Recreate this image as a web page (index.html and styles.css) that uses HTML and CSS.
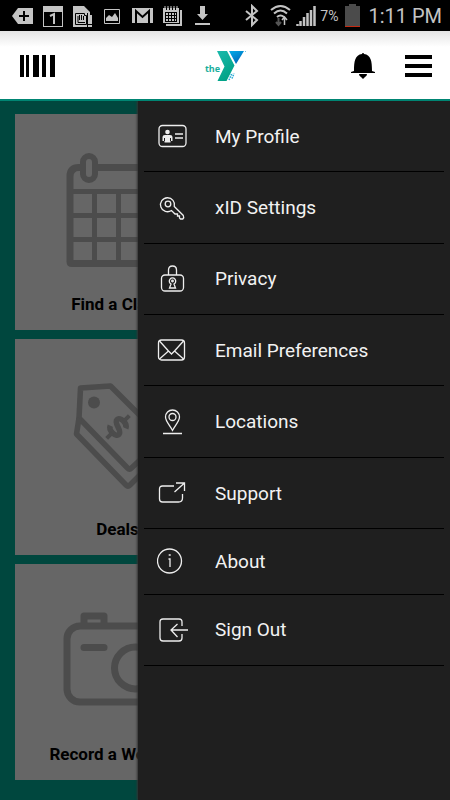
FILE: index.html
```html
<!DOCTYPE html>
<html lang="en">
<head>
<meta charset="utf-8">
<meta name="viewport" content="width=device-width, initial-scale=1">
<title>the Y</title>
<link rel="stylesheet" href="styles.css">
</head>
<body>
<div class="status">
  <div class="status-left">
    <svg width="21" height="24" viewBox="0 0 21 24"><path fill="#c4c4c4" d="M6 4h15v16H6L0 12z"/><path d="M7 12h10M12 7v10" stroke="#000" stroke-width="2"/></svg>
    <svg width="20" height="24" viewBox="0 0 20 24"><path fill="#c4c4c4" d="M0 2h20v21H0z"/><path d="M1 8h18v14H1z"/><path d="M7 12l4-2v10" fill="none" stroke="#c4c4c4" stroke-width="2"/></svg>
    <svg width="20" height="24" viewBox="0 0 20 24"><path fill="#c4c4c4" d="M0 2h11l6 6v3h2v12H0z"/><path d="M2.500 9.500h9v2h2v9h-11z" fill="none" stroke="#000"/><path d="M5 12v6.500h7M6.500 11v5M8.500 11v5M10.500 12v4" fill="none" stroke="#000"/><path d="M14.500 9v14M15 20.500h4" stroke="#000"/></svg>
    <svg width="18" height="24" viewBox="0 0 18 24"><path fill="none" stroke="#c4c4c4" d="M1.500 5.500h15v14h-15z"/><path fill="#c4c4c4" d="M3 14l3-3 3 2 3-4 3 5v3H3z"/></svg>
    <svg width="22" height="24" viewBox="0 0 22 24"><path fill="#c4c4c4" d="M1 4h21v15H1z"/><path d="M5 19V7l6.500 6L18 7v12" fill="none" stroke="#000" stroke-width="2"/></svg>
    <svg width="19" height="24" viewBox="0 0 19 24"><path fill="#c4c4c4" d="M3 6h16v16H3z"/><path d="M0 3h17v17H0z"/><path fill="#c4c4c4" d="M0 4h16v15H0z"/><path stroke="#000" d="M2 8.500h12M2 11.500h12M2 14.500h12M2 17.500h12M2.500 8v10M5.500 8v10M8.500 8v10M11.500 8v10M13.500 8v10M3.500 3v3M6.500 3v3M9.500 3v3M12.500 3v3"/><path stroke="#c4c4c4" d="M2 2v3M5 2v3M8 2v3M11 2v3M14 2v3"/></svg>
    <svg width="18" height="24" viewBox="0 0 18 24"><path fill="#c4c4c4" d="M8 2h5v8h3l-5.500 6L5 10h3zM3 19h15v2H3z"/></svg>
  </div>
  <div class="status-right">
    <svg width="22" height="24" viewBox="0 0 22 24"><path d="M3 7l11 9-5 5V2l5 5-11 9" fill="none" stroke="#c4c4c4" stroke-width="2"/></svg>
    <svg width="23" height="24" viewBox="0 0 23 24"><path d="M2 6q9.500-8 19 0M5 9.500q6.500-6 13 0M8 13q3.500-3 7 0" fill="none" stroke="#c4c4c4" stroke-width="2"/><path d="M15.500 21v-8M13 16l2.500-3 2.500 3" fill="none" stroke="#c4c4c4" stroke-width="1.500"/><path d="M9.500 14v7M7 18l2.500 3 2.500-3" fill="none" stroke="#555" stroke-width="2"/></svg>
    <svg width="20" height="24" viewBox="0 0 20 24"><path d="M1.500 22v-2M4.500 22v-5M8 22V13M11.500 22V9M15 22V6M18.500 22V2" stroke="#c4c4c4" stroke-width="2.500"/></svg>
    <span class="percent">7%</span>
    <svg width="22" height="24" viewBox="0 0 22 24"><path fill="#4b4b4b" d="M3 2h4V0h7v2h4v21H3z"/><path fill="#c42a12" d="M3 22h15v1H3z"/></svg>
    <span class="time">1:11 PM</span>
  </div>
</div>

<header class="header">
  <button class="icon-button" type="button" aria-label="Membership barcode"><svg width="35" height="24" viewBox="0 0 35 24"><path d="M0 1h4v22H0zM6 1h3v22H6zM13 1h6v22h-6zM22 1h4v22h-4zM30 1h5v22h-5z"/></svg></button>
  <a class="logo" href="#" aria-label="the Y">
    <span class="logo-the">the</span>
    <svg width="30" height="32" viewBox="0 0 30 32"><defs><linearGradient id="teal" x1="0" y1="0" x2=".5" y2="1"><stop offset="0" stop-color="#1bb9ac"/><stop offset="1" stop-color="#00a286"/></linearGradient><linearGradient id="blue" x1="0" y1="0" x2=".6" y2="1"><stop offset="0" stop-color="#00aeea"/><stop offset="1" stop-color="#0065b8"/></linearGradient></defs><path fill="url(#teal)" d="M0 1h10l7.500 14.500L9.500 31H.5l7-14.500z"/><path fill="url(#blue)" d="M12 1h15l-8 13z"/><path d="M12 30l3-7M15 28.500l2-5" stroke="#25a9d5" stroke-width="1.500" stroke-dasharray="1.500 1"/><path fill="#6ec5ea" d="M28 1h1v1h-1z"/></svg>
  </a>
  <div class="actions">
    <button class="icon-button" type="button" aria-label="Notifications"><svg width="24" height="28" viewBox="0 0 24 28"><path d="M0 21v-1l3-1C3 9 4 3 11 2q0-1 1-1t1 1c7 1 8 7 8 17l3 1v1zM8 22h8q0 2-2 3l-2 2-2-2q-2-1-2-3z"/></svg></button>
    <button class="icon-button" type="button" aria-label="Menu" aria-expanded="true"><svg width="27" height="24" viewBox="0 0 27 24"><path d="M0 1h27v4H0zM0 10h27v4H0zM0 19h27v4H0z"/></svg></button>
  </div>
</header>

<div class="stage">
  <main class="cards">
    <a class="card" href="#">
      <svg class="card-art" viewBox="0 0 120 130"><g fill="none" stroke="#4c4c4c" stroke-width="7"><path d="M23 18.500h-2q-9 0-9 9v85q0 2 2 2h92q2 0 2-2v-85q0-9-9-9h-2M38 18.500h44"/><rect x="25" y="7" width="12" height="24" rx="6" stroke-width="6"/><rect x="83" y="7" width="12" height="24" rx="6" stroke-width="6"/><path stroke-width="5" d="M12 42.500h96M12 66.500h96M12 90.500h96M36.500 44v70M60.500 44v70M84.500 44v70"/></g></svg>
      <span>Find a Class</span>
    </a>
    <a class="card" href="#"></a>
    <a class="card" href="#">
      <svg class="card-art" viewBox="0 0 120 130"><g fill="none" stroke="#4c4c4c" stroke-width="5.500" stroke-linejoin="round"><path d="M21 44l1.500-30 30-2 50 50v5L73.500 94q-2 2-4 0z"/><path d="M21 44l-2.500 16L68 111q2 2 4 0l31-31V66"/></g><circle cx="36" cy="28.500" r="6" fill="#4c4c4c"/><g transform="translate(60 53) rotate(45)" fill="none" stroke="#4c4c4c"><path stroke-width="5.500" d="M6.500-4.500C4.500-9.500-6-9-6-4.500C-6 .5 6-.5 6 4.500C6 9-4.500 9.500-6.500 4.500"/><path stroke-width="4" d="M0-16v8M0 8v8"/></g></svg>
      <span>Deals</span>
    </a>
    <a class="card" href="#"></a>
    <a class="card" href="#">
      <svg class="card-art" viewBox="0 0 120 130"><g fill="none" stroke="#4c4c4c" stroke-width="7"><rect x="9" y="27" width="102" height="76" rx="13"/><path d="M26 27V17h20v10" stroke-linejoin="round"/><circle cx="77.500" cy="69" r="21"/><path d="M26 48.500h20" stroke-linecap="round"/></g></svg>
      <span>Record a Workout</span>
    </a>
    <a class="card" href="#"></a>
  </main>

  <nav class="drawer">
    <ul class="menu">
      <li><a href="#"><svg viewBox="0 0 32 32"><rect x="2" y="5.500" width="27" height="21" rx="3.500"/><path d="M18 14h8M18 18h8"/><path class="solid" d="M8 15h5q2.500 0 2.500 2v4h-2v1.500h-6V21h-2v-4q0-2 2.500-2z"/><circle class="solid" cx="10.500" cy="12" r="2.300"/><path class="cut" d="M7.500 18v3M13.500 18v3"/></svg>My Profile</a></li>
      <li><a href="#"><svg viewBox="0 0 32 32"><path d="M17.300 14.500l9 9q1 2-.5 3.500h-2.300l-1-1v-2h-2v-2h-2.500l-3.500-3.500a7 7 0 1 1 2.800-4z"/><circle cx="11" cy="12" r="2.800"/></svg>xID Settings</a></li>
      <li><a href="#"><svg viewBox="0 0 32 32"><rect x="4.500" y="12" width="22" height="16" rx="3.500"/><path d="M11.500 12V7q0-4 4-4t4 4v5M14 21a3.200 3.200 0 1 1 3 0l1.500 4h-6z"/><circle cx="15.500" cy="18" r=".8"/></svg>Privacy</a></li>
      <li><a href="#"><svg viewBox="0 0 32 32"><rect x="1.500" y="6" width="26" height="20" rx="3"/><path d="M2.500 7l9 10 3 3 3-3 9-10M2.500 25l9-8M26.500 25l-9-8"/></svg>Email Preferences</a></li>
      <li><a href="#"><svg viewBox="0 0 32 32"><path d="M15.500 24.500C12.500 19 8.500 15 8.500 11a7 7 0 0 1 14 0c0 4-4 8-7 13.500zM6 27.500h19"/><circle cx="15.500" cy="11" r="3.500"/></svg>Locations</a></li>
      <li><a href="#"><svg viewBox="0 0 32 32"><path d="M17 9H5.500q-3 0-3 3v10q0 3 3 3h16q4 0 4-4v-4M17.500 15l10-9M19 6h8.500v8"/></svg>Support</a></li>
      <li><a href="#"><svg viewBox="0 0 32 32"><circle cx="12.500" cy="16" r="12"/><path d="M11.500 14H13v8M11.700 10h2"/></svg>About</a></li>
      <li><a href="#"><svg viewBox="0 0 32 32"><path d="M25 12V8q0-3-3-3H6Q3 5 3 8v16q0 3 3 3h16q3 0 3-3v-4M31 16H14M20.500 10L14 16l6.500 7"/></svg>Sign Out</a></li>
    </ul>
  </nav>
</div>
</body>
</html>
```
FILE: styles.css
```css
* { box-sizing: border-box; }

body {
  margin: 0;
  min-height: 100vh;
  display: flex;
  flex-direction: column;
  overflow: hidden;
  background: #00473e;
  font-family: Roboto, "Liberation Sans", sans-serif;
}

svg { display: block; flex: none; }
a { color: inherit; text-decoration: none; }

.status {
  display: flex;
  justify-content: space-between;
  align-items: center;
  height: 31px;
  padding: 0 8px 0 12px;
  background: #000;
  color: #c4c4c4;
}
.status-left, .status-right { display: flex; align-items: center; }
.status-left { gap: 10px; }
.status-right { gap: 4px; }
.percent { font-size: 14px; }
.time { font-size: 20px; }

.header {
  display: grid;
  grid-template-columns: 1fr auto 1fr;
  align-items: center;
  height: 70px;
  padding: 2px 18px 0 20px;
  background: linear-gradient(#e4e4e4, #fff 16px);
  border-bottom: 2px solid #008573;
}
.icon-button { padding: 0; border: 0; background: none; color: #000; justify-self: start; }
.logo { display: flex; align-items: center; }
.logo-the {
  margin-right: -3px;
  padding-top: 4px;
  color: #1aae9c;
  font: bold 9px "Open Sans", sans-serif;
}
.actions { display: flex; justify-self: end; align-items: center; gap: 30px; }

.stage { position: relative; flex: 1; overflow: hidden; }

.cards {
  display: grid;
  grid-template-columns: 1fr 1fr;
  gap: 9px 10px;
  padding: 13px 15px 20px;
}
.card {
  display: flex;
  flex-direction: column;
  align-items: center;
  justify-content: space-between;
  height: 216px;
  padding: 35px 0 15px;
  background: #666;
  color: #000;
  font-size: 17px;
  line-height: 22px;
  font-weight: bold;
}
.card-art { width: 120px; height: 130px; }

.drawer {
  position: absolute;
  inset: 0 0 0 138px;
  padding: 0 6px;
  background: #1f1f1f;
  box-shadow: -1px 0 2px #333;
}
.menu {
  display: grid;
  grid-template-rows: repeat(6, 12fr) 11fr 12fr;
  min-height: 565px;
  margin: 0;
  padding: 0;
  list-style: none;
}
.menu li { display: grid; border-bottom: 1px solid #000; }
.menu a {
  display: flex;
  align-items: center;
  gap: 26px;
  padding-left: 13px;
  color: #f2f2f2;
  font-size: 19px;
}
.menu svg {
  width: 32px;
  height: 32px;
  fill: none;
  stroke: #eee;
  stroke-width: 1.3;
}
.menu .solid { fill: #eee; stroke: none; }
.menu .cut { stroke: #1f1f1f; stroke-width: 1; }
```
